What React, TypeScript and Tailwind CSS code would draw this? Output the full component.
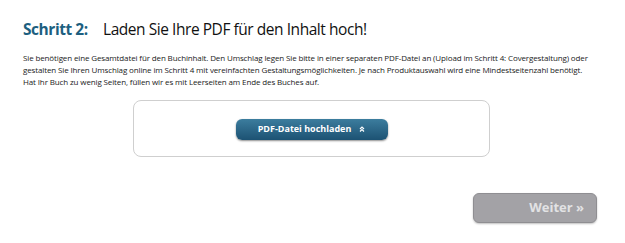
import React from "react";

export default function App() {
  return (
    <div className="w-[625px] h-[243px] bg-white relative" style={{ fontFamily: '"Open Sans", "Noto Sans", sans-serif' }}>
      <div className="pl-[23px] pr-[10px] pt-[18px]">
        <h1 className="flex items-baseline text-[15.5px] leading-[22px] tracking-[-0.45px] text-[#111]">
          <span className="font-bold text-[#1d5f80] w-[80px]">Schritt 2:</span>
          <span>Laden Sie Ihre PDF für den Inhalt hoch!</span>
        </h1>
        <p className="mt-[12px] text-[8px] leading-[12px] tracking-[-0.13px] text-[#222] whitespace-nowrap">
          Sie benötigen eine Gesamtdatei für den Buchinhalt. Den Umschlag legen Sie bitte in einer separaten PDF-Datei an (Upload im Schritt 4: Covergestaltung) oder
          <br />
          gestalten Sie Ihren Umschlag online im Schritt 4 mit vereinfachten Gestaltungsmöglichkeiten. Je nach Produktauswahl wird eine Mindestseitenzahl benötigt.
          <br />
          Hat Ihr Buch zu wenig Seiten, füllen wir es mit Leerseiten am Ende des Buches auf.
        </p>
        <div className="mt-[12px] ml-[110px] w-[357px] h-[57px] border border-[#cfcfcf] rounded-[8px] flex items-center justify-center">
          <button className="mt-[1px] w-[152px] h-[21px] rounded-[6px] bg-gradient-to-b from-[#3c7d9e] to-[#1c5273] shadow-[0_1px_2px_rgba(0,0,0,0.45)] flex items-center justify-center gap-[8px] text-white text-[9px] font-bold">
            <span>PDF-Datei hochladen</span>
            <svg width="6" height="6" viewBox="0 0 6 6" fill="none" stroke="white" strokeWidth="1.2">
              <path d="M1 3 L3 1 L5 3" />
              <path d="M1 5.5 L3 3.5 L5 5.5" />
            </svg>
          </button>
        </div>
        <div className="flex justify-end mt-[36px] pr-[18px]">
          <button className="w-[124px] h-[30px] rounded-[6px] bg-[#a3a2a6] border border-[#8f8e92] shadow-[0_1px_2px_rgba(0,0,0,0.25)] flex items-center justify-end pr-[12px] text-[#e2e2e4] text-[13px] font-bold">
            Weiter »
          </button>
        </div>
      </div>
    </div>
  );
}
